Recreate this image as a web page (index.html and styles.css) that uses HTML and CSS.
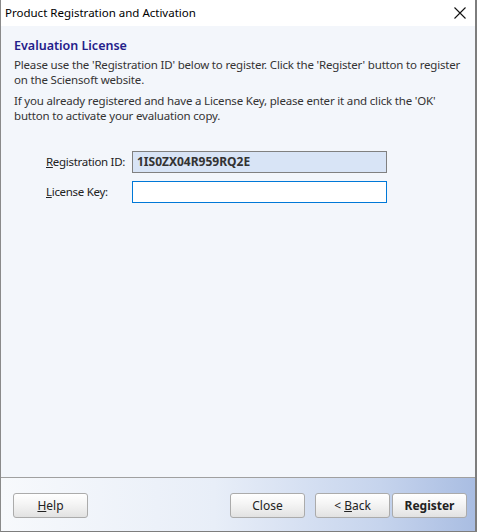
FILE: index.html
```html
<!DOCTYPE html>
<html>
<head>
<meta charset="utf-8">
<link rel="stylesheet" href="styles.css">
</head>
<body>
<div class="window">
  <div class="titlebar">
    <span class="title">Product Registration and Activation</span>
    <svg class="close" width="12" height="12" viewBox="0 0 12 12"><path d="M0.5 0.5 L11.5 11.5 M11.5 0.5 L0.5 11.5" stroke="#111" stroke-width="1.1" fill="none"/></svg>
  </div>
  <div class="content">
    <h1 class="heading">Evaluation License</h1>
    <p class="text">Please use the 'Registration ID' below to register. Click the 'Register' button to register on the Sciensoft website.</p>
    <p class="text second">If you already registered and have a License Key, please enter it and click the 'OK' button to activate your evaluation copy.</p>
    <div class="fields">
      <label class="label"><u>R</u>egistration ID:</label>
      <div class="input readonly">1IS0ZX04R959RQ2E</div>
      <label class="label"><u>L</u>icense Key:</label>
      <div class="input focused"></div>
    </div>
  </div>
  <div class="footer">
    <button class="btn"><u>H</u>elp</button>
    <div class="spacer"></div>
    <button class="btn">Close</button>
    <button class="btn back">&lt; <u>B</u>ack</button>
    <button class="btn bold">Register</button>
  </div>
</div>
</body>
</html>
```
FILE: styles.css
```css
html, body {
  margin: 0;
  padding: 0;
  background: #ffffff;
}
body {
  font-family: "Noto Sans", "Open Sans", sans-serif;
  font-size: 11.5px;
  color: #333;
}
.window {
  width: 477px;
  height: 532px;
  box-sizing: border-box;
  border-left: 1px solid #8a8a8a;
  border-right: 2px solid #7d7d7d;
  border-bottom: 1px solid #7d7d7d;
  display: flex;
  flex-direction: column;
  background: #f3f6fb;
}
.titlebar {
  height: 26px;
  flex: none;
  background: #fff;
  display: flex;
  align-items: center;
  padding-left: 4px;
  padding-right: 9px;
}
.title {
  flex: 1;
  color: #000;
  font-size: 11.5px;
  line-height: 16px;
}
.close {
  display: block;
}
.content {
  flex: 1;
  padding: 11px 8px 0 13px;
  border-bottom: 1px solid #a0a0a0;
}
.heading {
  margin: 0;
  font-size: 12.5px;
  font-weight: 600;
  line-height: 18px;
  color: #24208a;
}
.text {
  margin: 2px 0 0 0;
  line-height: 15px;
  color: #333;
  letter-spacing: -0.18px;
}
.text.second {
  margin-top: 6px;
}
.fields {
  display: grid;
  grid-template-columns: 86px 255px;
  row-gap: 8px;
  margin: 28px 0 0 32px;
  align-items: center;
}
.label {
  color: #222;
  line-height: 16px;
  white-space: nowrap;
  letter-spacing: -0.3px;
}
.input {
  height: 22px;
  box-sizing: border-box;
  border: 1px solid #7a7a7a;
  background: #fff;
  padding: 0 4px;
  line-height: 20px;
}
.input.readonly {
  background: #d8e4f6;
  border-color: #808080;
  font-weight: 700;
  font-size: 12px;
  color: #333;
}
.input.focused {
  border-color: #0078d7;
}
.footer {
  height: 53px;
  flex: none;
  box-sizing: border-box;
  padding: 15px 8px 0 12px;
  display: flex;
  align-items: flex-start;
  gap: 2px;
  background: linear-gradient(to right, #f7f9fc 0%, #e8eef8 45%, #c6d4ed 80%, #a9bde2 100%);
}
.spacer {
  flex: 1;
}
.btn {
  width: 75px;
  height: 25px;
  box-sizing: border-box;
  border: 1px solid #ababab;
  border-radius: 3px;
  background: linear-gradient(to bottom, #ffffff 0%, #f4f4f4 45%, #e2e2e2 100%);
  font-family: "Noto Sans", "Open Sans", sans-serif;
  font-size: 12px;
  color: #222;
  padding: 0;
  line-height: 22px;
}
.btn.back {
  margin-left: 8px;
}
.btn.bold {
  font-weight: 700;
}
```
